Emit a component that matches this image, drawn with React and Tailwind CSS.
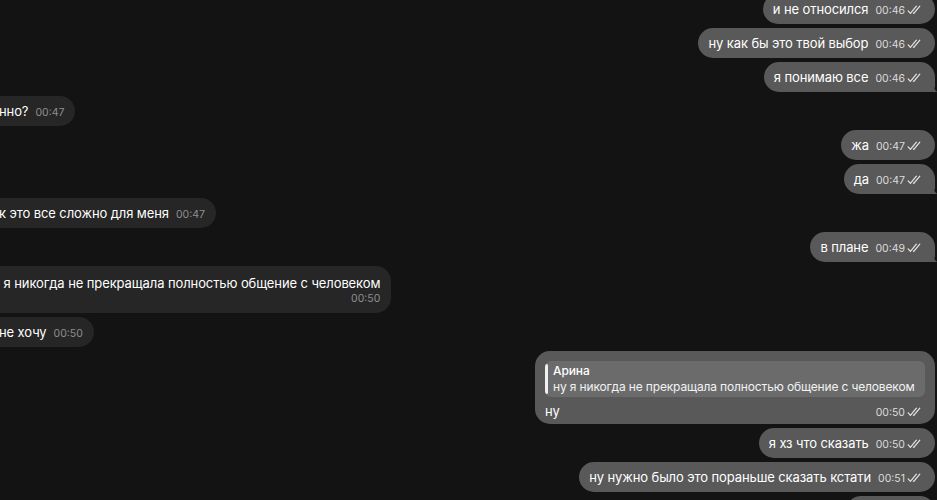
import React from "react";

function Ticks({ className = "" }) {
  return (
    <svg width="15" height="10" viewBox="0 0 15 10" className={className} fill="none" stroke="currentColor" strokeWidth="1.2" strokeLinecap="round" strokeLinejoin="round">
      <path d="M1.2 5.8 L3.4 8.4 L9.4 1.2" />
      <path d="M6.4 8.1 L6.8 8.4 L12.8 1.2" />
    </svg>
  );
}

function Tail() {
  return (
    <svg width="9" height="14" viewBox="0 0 9 14" className="absolute bottom-0 right-[-3px] text-[#595959]" fill="currentColor">
      <path d="M0 0 L0 14 L9 14 C6 13.2 4 10.5 3.6 0 Z" />
    </svg>
  );
}

const body = "text-[13px] leading-[18px] tracking-[-0.1px]";
const tm = "text-[10.5px] leading-[14px]";

function Out({ text, time, tail = false }) {
  return (
    <div className="flex justify-end pr-[2px]">
      <div className={`relative flex h-[30px] items-center rounded-[15px] bg-[#595959] pl-[10px] pr-[13px] text-white ${tail ? "rounded-br-[6px]" : ""}`}>
        <span className={body}>{text}</span>
        <span className={`ml-[7px] mt-[3px] ${tm} text-[#dcdcdc]`}>{time}</span>
        <Ticks className="ml-[2px] mt-[2px] text-[#e6e6e6]" />
        {tail && <Tail />}
      </div>
    </div>
  );
}

function In({ text, time, ml }) {
  return (
    <div className="flex justify-start">
      <div className={`flex h-[30px] items-center rounded-[15px] bg-[#262626] pl-[20px] pr-[11px] text-white ${ml}`}>
        <span className={body}>{text}</span>
        <span className={`ml-[7px] mt-[3px] ${tm} text-[#8e8e93]`}>{time}</span>
      </div>
    </div>
  );
}

export default function App() {
  return (
    <div
      className="h-[500px] w-[937px] overflow-hidden bg-[#131313]"
      style={{ fontFamily: "Inter, 'Noto Sans', sans-serif" }}
    >
      <div className="mt-[-6px] flex flex-col gap-[4px]">
        <Out text="и не относился" time="00:46" />
        <Out text="ну как бы это твой выбор" time="00:46" />
        <Out text="я понимаю все" time="00:46" tail />
        <In text="нно?" time="00:47" ml="ml-[-21px]" />
        <Out text="жа" time="00:47" />
        <Out text="да" time="00:47" tail />
        <In text="к это все сложно для меня" time="00:47" ml="ml-[-21px]" />
        <Out text="в плане" time="00:49" tail />
        <div className="flex justify-start">
          <div className="ml-[-20px] flex h-[47px] flex-col rounded-[15px] bg-[#262626] pl-[20px] pr-[11px] pt-[8px] text-white">
            <span className={body}>&nbsp;я никогда не прекращала полностью общение с человеком</span>
            <span className={`self-end ${tm} text-[#8e8e93]`}>00:50</span>
          </div>
        </div>
        <In text="не хочу" time="00:50" ml="ml-[-21px]" />
        <div className="flex justify-end pr-[2px]">
          <div className="flex h-[73px] w-[400px] flex-col rounded-[15px] bg-[#595959] px-[10px] pt-[10px] text-white">
            <div className="flex h-[36px] overflow-hidden rounded-[6px] bg-[#6b6b6b]">
              <div className="my-[3px] w-[3px] rounded-full bg-[#f0f0f0]" />
              <div className="flex flex-col pl-[5px] pt-[2px]">
                <span className="text-[12px] font-medium leading-[16px] tracking-[-0.1px]">Арина</span>
                <span className="whitespace-nowrap text-[12px] leading-[16px] tracking-[-0.15px] text-[#f2f2f2]">ну я никогда не прекращала полностью общение с человеком</span>
              </div>
            </div>
            <div className="mt-[5px] flex items-center">
              <span className={body}>ну</span>
              <span className={`ml-auto mt-[3px] ${tm} text-[#dcdcdc]`}>00:50</span>
              <Ticks className="ml-[2px] mr-[3px] mt-[2px] text-[#e6e6e6]" />
            </div>
          </div>
        </div>
        <Out text="я хз что сказать" time="00:50" />
        <Out text="ну нужно было это пораньше сказать кстати" time="00:51" />
        <Out text="ну" time="00:51" />
      </div>
    </div>
  );
}
